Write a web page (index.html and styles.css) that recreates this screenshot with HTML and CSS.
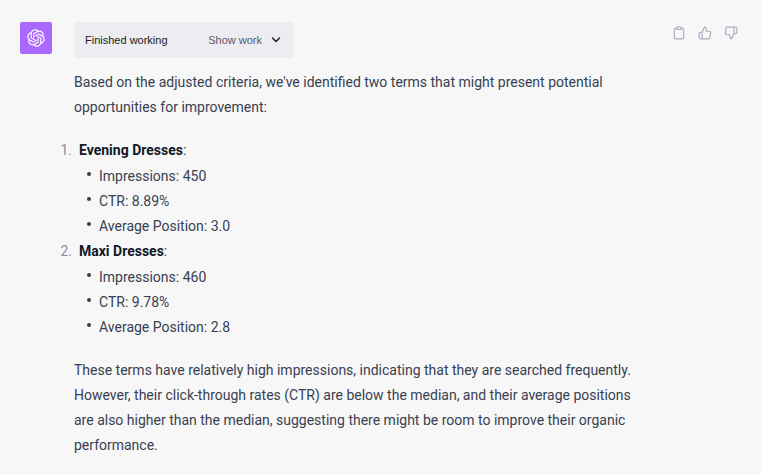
FILE: index.html
```
<!DOCTYPE html>
<html lang="en">
<head>
<meta charset="utf-8">
<title>Chat</title>
<link rel="stylesheet" href="styles.css">
</head>
<body>
<main class="message">
  <div class="avatar">
    <svg viewBox="0 0 41 41" aria-hidden="true"><path d="M37.5324 16.8707C37.9808 15.5241 38.1363 14.0974 37.9886 12.6859C37.8409 11.2744 37.3934 9.91076 36.676 8.68622C35.6126 6.83404 33.9882 5.3676 32.0373 4.4985C30.0864 3.62941 27.9098 3.40259 25.8215 3.85078C24.8796 2.7893 23.7219 1.94125 22.4257 1.36341C21.1295 0.785575 19.7249 0.491269 18.3058 0.500197C16.1708 0.495044 14.0893 1.16803 12.3614 2.42214C10.6335 3.67624 9.34853 5.44666 8.6917 7.47815C7.30085 7.76286 5.98686 8.3414 4.8377 9.17505C3.68854 10.0087 2.73073 11.0782 2.02839 12.312C0.956464 14.1591 0.498905 16.2988 0.721698 18.4228C0.944492 20.5467 1.83612 22.5449 3.268 24.1293C2.81966 25.4759 2.66413 26.9026 2.81182 28.3141C2.95951 29.7256 3.40701 31.0892 4.12437 32.3138C5.18791 34.1659 6.8123 35.6322 8.76321 36.5013C10.7141 37.3704 12.8907 37.5973 14.9789 37.1492C15.9208 38.2107 17.0786 39.0587 18.3747 39.6366C19.6709 40.2144 21.0755 40.5087 22.4946 40.4998C24.6307 40.5054 26.7133 39.8321 28.4418 38.5772C30.1704 37.3223 31.4556 35.5506 32.1119 33.5179C33.5027 33.2332 34.8167 32.6547 35.9659 31.821C37.115 30.9874 38.0728 29.9178 38.7752 28.684C39.8458 26.8371 40.3023 24.6979 40.0789 22.5748C39.8556 20.4517 38.9639 18.4544 37.5324 16.8707ZM22.4978 37.8849C20.7443 37.8874 19.0459 37.2733 17.6994 36.1501C17.7601 36.117 17.8666 36.0586 17.936 36.0161L25.9004 31.4156C26.1003 31.3019 26.2663 31.137 26.3813 30.9378C26.4964 30.7386 26.5563 30.5124 26.5549 30.2825V19.0542L29.9213 20.998C29.9389 21.0068 29.9541 21.0198 29.9656 21.0359C29.977 21.052 29.9842 21.0707 29.9867 21.0902V30.3889C29.9842 32.375 29.1946 34.2791 27.7909 35.6841C26.3872 37.0892 24.4838 37.8806 22.4978 37.8849ZM6.39227 31.0064C5.51397 29.4888 5.19742 27.7107 5.49804 25.9832C5.55718 26.0187 5.66048 26.0818 5.73461 26.1244L13.699 30.7248C13.8975 30.8408 14.1233 30.902 14.3532 30.902C14.583 30.902 14.8088 30.8408 15.0073 30.7248L24.731 25.1103V28.9979C24.7321 29.0177 24.7283 29.0376 24.7199 29.0556C24.7115 29.0736 24.6988 29.0893 24.6829 29.1012L16.6317 33.7497C14.9096 34.7416 12.8643 35.0097 10.9447 34.4954C9.02506 33.9811 7.38785 32.7263 6.39227 31.0064ZM4.29707 13.6194C5.17156 12.0998 6.55279 10.9364 8.19885 10.3327C8.19885 10.4013 8.19491 10.5228 8.19491 10.6071V19.808C8.19351 20.0378 8.25334 20.2638 8.36823 20.4629C8.48312 20.6619 8.64893 20.8267 8.84863 20.9404L18.5723 26.5542L15.206 28.4979C15.1894 28.5089 15.1703 28.5155 15.1505 28.5173C15.1307 28.5191 15.1107 28.516 15.0924 28.5082L7.04046 23.8557C5.32135 22.8601 4.06716 21.2235 3.55289 19.3046C3.03862 17.3858 3.30624 15.3413 4.29707 13.6194ZM31.955 20.0556L22.2312 14.4411L25.5976 12.4981C25.6142 12.4872 25.6333 12.4805 25.6531 12.4787C25.6729 12.4769 25.6928 12.4801 25.7111 12.4879L33.7631 17.1364C34.9967 17.849 36.0017 18.8982 36.6606 20.1613C37.3194 21.4244 37.6047 22.849 37.4832 24.2684C37.3617 25.6878 36.8382 27.0432 35.9743 28.1759C35.1103 29.3086 33.9415 30.1717 32.6047 30.6641C32.6047 30.5947 32.6047 30.4733 32.6047 30.3889V21.188C32.6066 20.9586 32.5474 20.7328 32.4332 20.5338C32.319 20.3348 32.154 20.1698 31.955 20.0556ZM35.3055 15.0128C35.2464 14.9765 35.1431 14.9142 35.069 14.8717L27.1045 10.2712C26.906 10.1554 26.6803 10.0943 26.4504 10.0943C26.2206 10.0943 25.9948 10.1554 25.7963 10.2712L16.0726 15.8858V11.9982C16.0715 11.9783 16.0753 11.9585 16.0837 11.9405C16.0921 11.9225 16.1048 11.9068 16.1207 11.8949L24.1719 7.25025C25.4053 6.53903 26.8158 6.19376 28.2383 6.25482C29.6608 6.31589 31.0364 6.78077 32.2044 7.59508C33.3723 8.40939 34.2842 9.53945 34.8334 10.8531C35.3826 12.1667 35.5464 13.6095 35.3055 15.0128ZM14.2424 21.9419L10.8752 19.9981C10.8576 19.9893 10.8423 19.9763 10.8309 19.9602C10.8195 19.9441 10.8122 19.9254 10.8098 19.9058V10.6071C10.8107 9.18295 11.2173 7.78848 11.9819 6.58696C12.7466 5.38544 13.8377 4.42659 15.1275 3.82264C16.4173 3.21869 17.8524 2.99464 19.2649 3.1767C20.6775 3.35876 22.0089 3.93941 23.1034 4.85067C23.0427 4.88379 22.937 4.94215 22.8668 4.98473L14.9024 9.58517C14.7025 9.69878 14.5366 9.86356 14.4215 10.0626C14.3065 10.2616 14.2466 10.4877 14.2479 10.7175L14.2424 21.9419ZM16.071 17.9991L20.4018 15.4978L24.7325 17.9975V22.9985L20.4018 25.4983L16.071 22.9985V17.9991Z"/></svg>
  </div>
  <article class="content">
    <div class="status">
      <span class="status-label">Finished working</span>
      <button class="toggle" type="button">Show work
        <svg class="icon" viewBox="0 0 24 24" aria-hidden="true"><path d="M5 8l7 7 7-7"/></svg>
      </button>
    </div>
    <p>Based on the adjusted criteria, we've identified two terms that might present potential opportunities for improvement:</p>
    <ol class="terms">
      <li><strong>Evening Dresses</strong>:
        <ul class="stats">
          <li>Impressions: 450</li>
          <li>CTR: 8.89%</li>
          <li>Average Position: 3.0</li>
        </ul>
      </li>
      <li><strong>Maxi Dresses</strong>:
        <ul class="stats">
          <li>Impressions: 460</li>
          <li>CTR: 9.78%</li>
          <li>Average Position: 2.8</li>
        </ul>
      </li>
    </ol>
    <p>These terms have relatively high impressions, indicating that they are searched frequently. However, their click-through rates (CTR) are below the median, and their average positions are also higher than the median, suggesting there might be room to improve their organic performance.</p>
  </article>
  <div class="actions">
    <button type="button" aria-label="Copy"><svg class="icon" viewBox="0 0 24 24"><path d="M16 4h2a2 2 0 0 1 2 2v14a2 2 0 0 1-2 2H6a2 2 0 0 1-2-2V6a2 2 0 0 1 2-2h2"/><rect x="8" y="2" width="8" height="4" rx="1"/></svg></button>
    <button type="button" aria-label="Good response"><svg class="icon" viewBox="0 0 24 24"><path d="M14 9V5a3 3 0 0 0-3-3l-4 9v11h11.280a2 2 0 0 0 2-1.700l1.380-9a2 2 0 0 0-2-2.300zM7 22H4a2 2 0 0 1-2-2v-7a2 2 0 0 1 2-2h3"/></svg></button>
    <button type="button" aria-label="Bad response"><svg class="icon" viewBox="0 0 24 24"><path d="M10 15v4a3 3 0 0 0 3 3l4-9V2H5.720a2 2 0 0 0-2 1.700l-1.380 9a2 2 0 0 0 2 2.300zM17 2h2.670A2.310 2.310 0 0 1 22 4v7a2.310 2.310 0 0 1-2.330 2H17"/></svg></button>
  </div>
</main>
</body>
</html>
```
FILE: styles.css
```
* { box-sizing: border-box; }

body {
  margin: 0;
  background: #f7f7f8;
  color: #374151;
  font: 14px/25px Roboto, "Liberation Sans", sans-serif;
}

button {
  display: flex;
  align-items: center;
  padding: 0;
  border: 0;
  background: none;
  color: inherit;
  font: inherit;
  cursor: pointer;
}

.icon {
  display: block;
  width: 14px;
  height: 14px;
  fill: none;
  stroke: currentColor;
  stroke-width: 2;
  stroke-linecap: round;
  stroke-linejoin: round;
}

.message {
  display: flex;
  align-items: flex-start;
  padding: 22px 23px 16px 20px;
}

.avatar {
  display: flex;
  align-items: center;
  justify-content: center;
  flex: none;
  width: 32px;
  height: 32px;
  margin-right: 22px;
  border-radius: 2px;
  background: #ab68ff;
}

.avatar svg {
  width: 18px;
  height: 18px;
  fill: #fff;
}

.content {
  flex: 1;
  min-width: 0;
}

.status {
  display: flex;
  align-items: center;
  justify-content: space-between;
  width: 220px;
  max-width: 100%;
  height: 36px;
  margin-bottom: 12px;
  padding: 0 12px 0 11px;
  border-radius: 4px;
  background: #ececf1;
  font-family: "Liberation Sans", Arial, sans-serif;
  font-size: 11px;
}

.status-label { color: #202123; }

.toggle {
  gap: 8px;
  color: #565869;
}

.toggle .icon {
  width: 12px;
  height: 12px;
  color: #202123;
  stroke-width: 3;
}

p { margin: 0; }

.terms {
  margin: 18px 0;
  padding-left: 5px;
  list-style: none;
  counter-reset: term;
}

.terms > li {
  position: relative;
  counter-increment: term;
}

.terms > li::before {
  content: counter(term) ".";
  position: absolute;
  right: 100%;
  margin-right: 7px;
  color: #8e8ea0;
}

strong {
  color: #111827;
  font-weight: 700;
}

.stats {
  margin: 1px 0 0;
  padding-left: 20px;
  list-style: none;
}

.stats li { position: relative; }

.stats li::before {
  content: "";
  position: absolute;
  top: 8px;
  left: -12px;
  width: 4px;
  height: 4px;
  border-radius: 50%;
  background: #374151;
}

.actions {
  display: flex;
  flex: none;
  gap: 12px;
  margin: 4px 0 0 24px;
  color: #acacbe;
}
```
